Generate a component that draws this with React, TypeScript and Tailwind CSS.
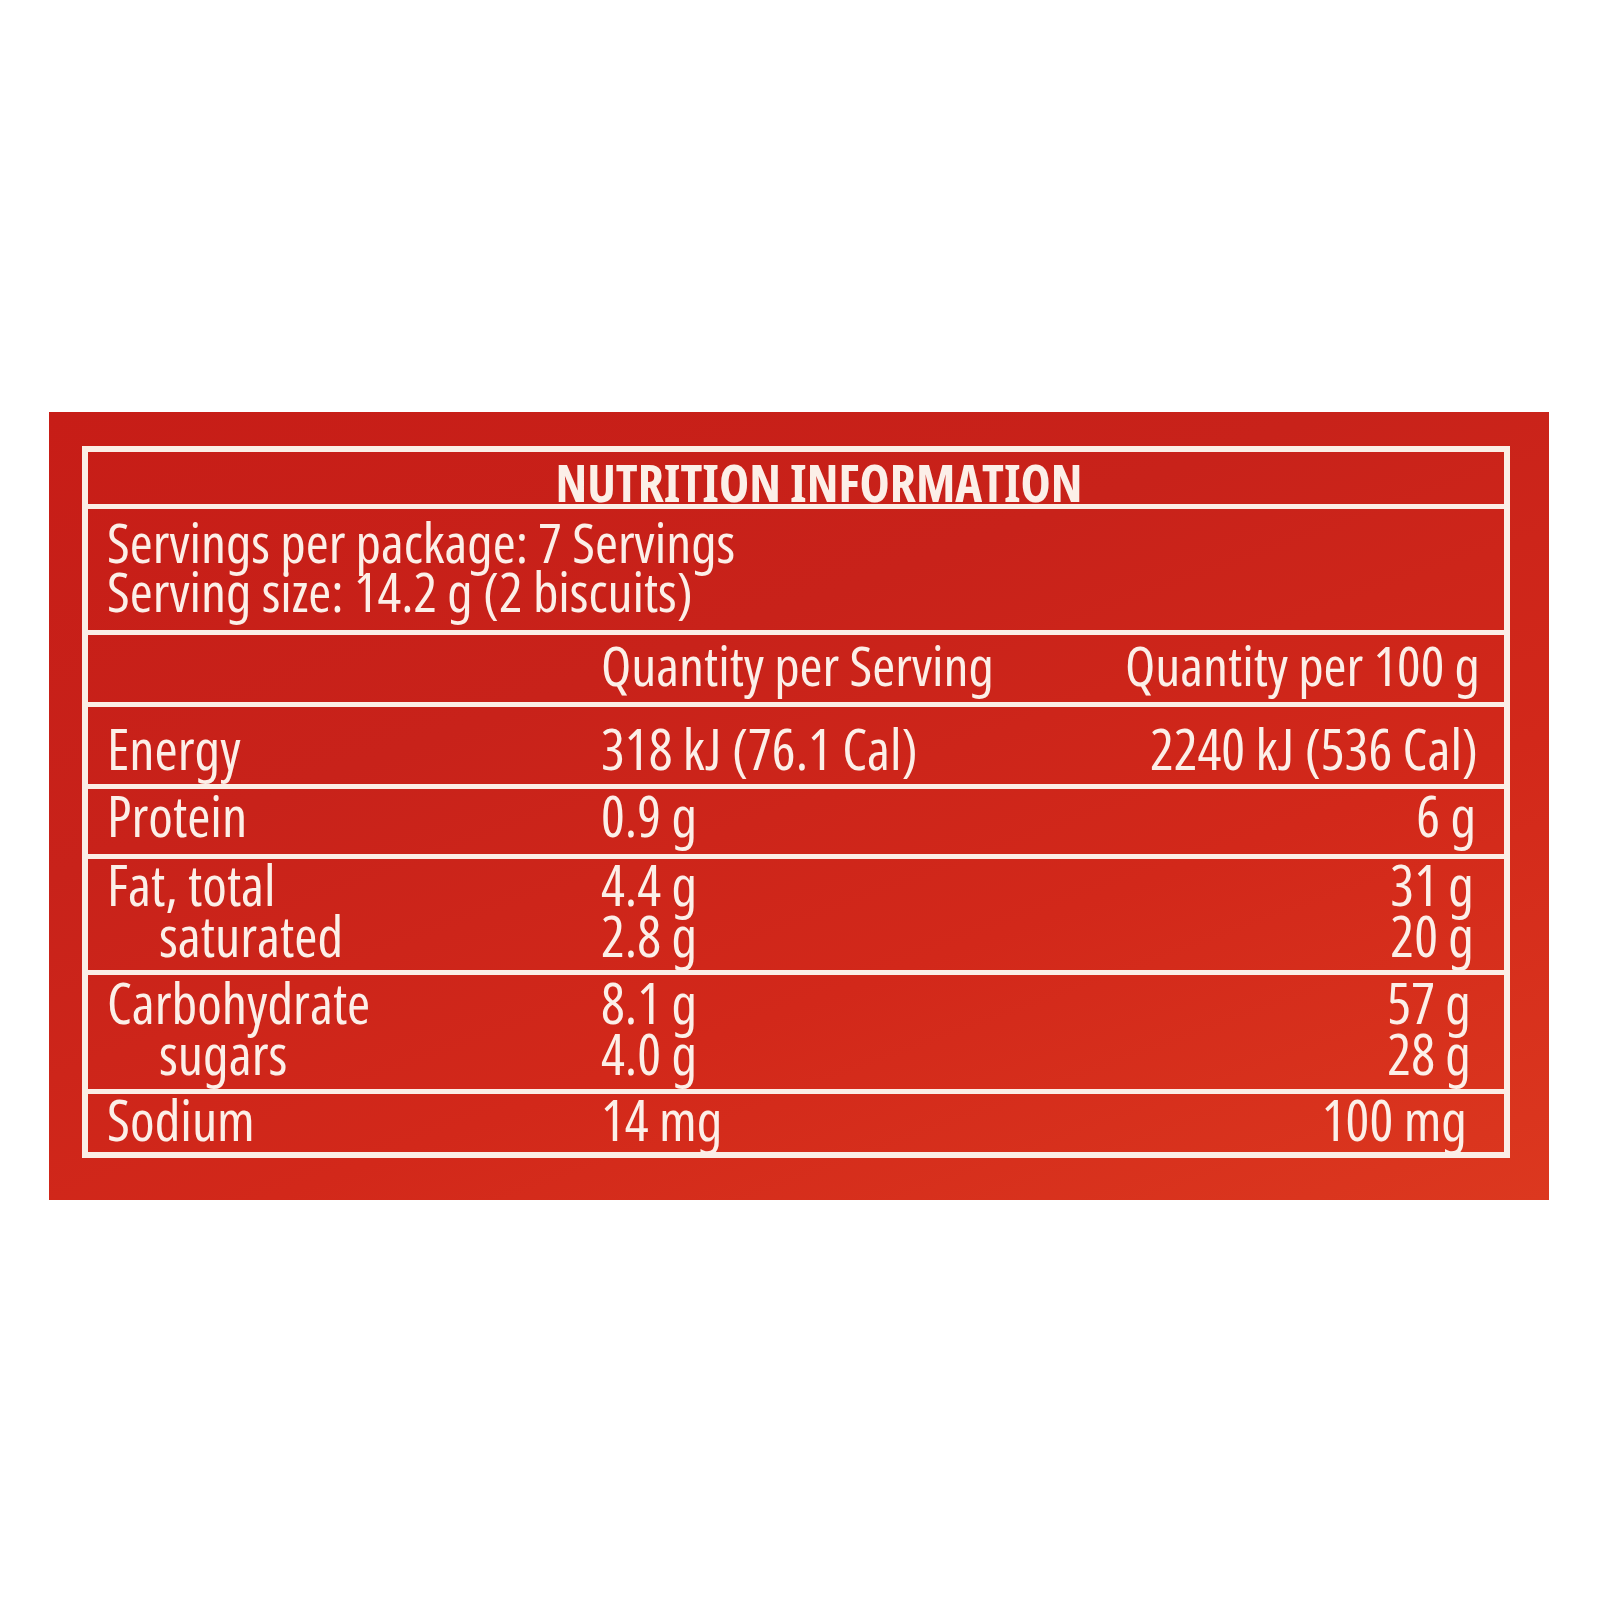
import React from "react";

const font = "font-['Open_Sans','DejaVu_Sans_Condensed',sans-serif] [font-stretch:75%] [font-feature-settings:'salt','ss01']";

type Row = {
  h: string;
  pt: string;
  pr: string;
  last?: boolean;
  lines: { label: string; indent?: boolean; serv: string; per100: string }[];
};

const rows: Row[] = [
  { h: "h-[82px]", pt: "pt-[16px]", pr: "pr-[26px]", lines: [{ label: "Energy", serv: "318 kJ (76.1 Cal)", per100: "2240 kJ (536 Cal)" }] },
  { h: "h-[70px]", pt: "pt-[1px]", pr: "pr-[28px]", lines: [{ label: "Protein", serv: "0.9 g", per100: "6 g" }] },
  {
    h: "h-[116px]",
    pt: "pt-0",
    pr: "pr-[30px]",
    lines: [
      { label: "Fat, total", serv: "4.4 g", per100: "31 g" },
      { label: "saturated", indent: true, serv: "2.8 g", per100: "20 g" },
    ],
  },
  {
    h: "h-[119px]",
    pt: "pt-[2px]",
    pr: "pr-[33px]",
    lines: [
      { label: "Carbohydrate", serv: "8.1 g", per100: "57 g" },
      { label: "sugars", indent: true, serv: "4.0 g", per100: "28 g" },
    ],
  },
  { h: "h-[58px]", pt: "pt-0", pr: "pr-[37px]", last: true, lines: [{ label: "Sodium", serv: "14 mg", per100: "100 mg" }] },
];

export default function App() {
  return (
    <div className={`w-[1600px] h-[1600px] bg-white pt-[412px] pl-[49px] ${font} text-[#fcefe8]`}>
      <div className="w-[1500px] h-[788px] bg-[linear-gradient(160deg,#c71d17_0%,#c8221a_35%,#d2281a_65%,#dc381f_100%)] pt-[34px] pl-[33px]">
        <div className="w-[1428px] h-[712px] border-[6px] border-[#fbeee6] flex flex-col">
          {/* Title */}
          <div className="h-[57px] shrink-0 border-b-[5px] border-[#fbeee6] pt-[5px] pl-[46px] text-center text-[51px] leading-[50px] font-bold whitespace-nowrap">
            NUTRITION INFORMATION
          </div>
          {/* Servings */}
          <div className="h-[126px] shrink-0 border-b-[5px] border-[#fbeee6] pt-[8px] pl-[19px] text-[55.5px] leading-[49px] font-medium whitespace-nowrap">
            <div>Servings per package: 7 Servings</div>
            <div>Serving size: 14.2 g (2 biscuits)</div>
          </div>
          {/* Header */}
          <div className="h-[72px] shrink-0 border-b-[5px] border-[#fbeee6] pt-[5px] pl-[19px] pr-[24px] flex text-[55.5px] leading-[49px] font-medium whitespace-nowrap">
            <div className="w-[494px] shrink-0" />
            <div className="flex-1">Quantity per Serving</div>
            <div className="text-right">Quantity per 100 g</div>
          </div>
          {rows.map((r, i) => (
            <div
              key={i}
              className={`${r.h} shrink-0 ${r.last ? "" : "border-b-[5px]"} border-[#fbeee6] ${r.pt} pl-[19px] ${r.pr} text-[56px] leading-[51px] font-medium whitespace-nowrap`}
            >
              {r.lines.map((l, j) => (
                <div key={j} className="flex">
                  <div className={`w-[494px] shrink-0 ${l.indent ? "pl-[52px]" : ""}`}>{l.label}</div>
                  <div className="flex-1">{l.serv}</div>
                  <div className="text-right">{l.per100}</div>
                </div>
              ))}
            </div>
          ))}
        </div>
      </div>
    </div>
  );
}
